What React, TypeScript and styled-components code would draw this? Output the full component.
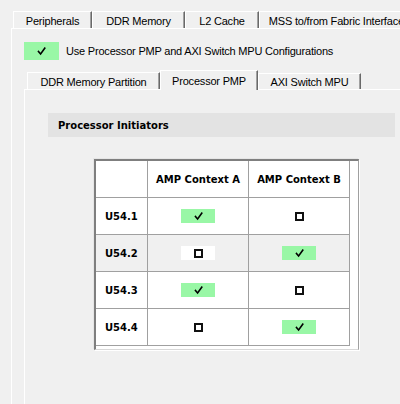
import React from "react";
import styled, { createGlobalStyle } from "styled-components";

const Global = createGlobalStyle`
  html, body { margin: 0; padding: 0; background: #f0f0f0; }
  body { font-family: "Liberation Sans", Arial, sans-serif; font-size: 11px; color: #000; overflow: hidden; }
`;

const Page = styled.div`
  width: 400px;
  height: 404px;
  padding: 11px 0 0 11px;
  box-sizing: border-box;
  overflow: hidden;
  display: flex;
  flex-direction: column;
`;

const TabStrip = styled.div<{ $indent: number }>`
  display: flex;
  align-items: flex-end;
  padding-left: ${(p) => p.$indent}px;
  height: ${(p) => (p.$indent > 2 ? 19 : 17)}px;
  white-space: nowrap;
`;

const Tab = styled.div<{ $w: number; $active?: boolean; $h?: number }>`
  flex: 0 0 auto;
  width: ${(p) => p.$w}px;
  height: ${(p) => p.$h ?? 17}px;
  box-sizing: border-box;
  border-top: 1px solid #ffffff;
  border-left: 1px solid #ffffff;
  border-right: 1px solid #696969;
  box-shadow: inset -1px 0 0 #a0a0a0;
  display: flex;
  align-items: center;
  justify-content: center;
  letter-spacing: -0.2px;
  padding-top: ${(p) => (p.$active ? 0 : 1)}px;
  background: #f0f0f0;
  position: relative;
  z-index: ${(p) => (p.$active ? 2 : 1)};
  margin-bottom: ${(p) => (p.$active ? -1 : 0)}px;
`;

const OuterPanel = styled.div`
  flex: 1;
  border-top: 1px solid #ffffff;
  border-left: 1px solid #ffffff;
  padding: 13px 0 0 12px;
  display: flex;
  flex-direction: column;
`;

const CheckRow = styled.div`
  display: flex;
  align-items: center;
  gap: 7px;
  height: 18px;
  letter-spacing: -0.2px;
`;

const CheckBox = styled.div<{ $on: boolean; $w: number; $h: number }>`
  width: ${(p) => p.$w}px;
  height: ${(p) => p.$h}px;
  background: ${(p) => (p.$on ? "#99f7a6" : "#ffffff")};
  display: flex;
  align-items: center;
  justify-content: center;
  flex: 0 0 auto;
`;

const EmptySquare = styled.div`
  width: 9px;
  height: 9px;
  box-sizing: border-box;
  border: 2px solid #111;
  background: #fff;
`;

const InnerTabs = styled.div`
  margin-top: 10px;
`;

const InnerPanel = styled.div`
  flex: 1;
  border-top: 1px solid #ffffff;
  border-left: 1px solid #ffffff;
  padding: 23px 0 0 23px;
  display: flex;
  flex-direction: column;
  align-items: flex-start;
`;

const SectionHeader = styled.div`
  width: 347px;
  height: 24px;
  background: #e3e3e3;
  box-sizing: border-box;
  padding-left: 10px;
  display: flex;
  align-items: center;
  font-family: "DejaVu Sans", Verdana, sans-serif;
  font-weight: bold;
  font-size: 10px;
`;

const TableFrame = styled.div`
  margin: 22px 0 0 46px;
  width: 265px;
  height: 191px;
  box-sizing: border-box;
  border-top: 2px solid #7f7f7f;
  border-left: 2px solid #7f7f7f;
  border-right: 1px solid #a0a0a0;
  border-bottom: 1px solid #d8d8d8;
  background: #ffffff;
  box-shadow: 1px 1px 0 #ffffff, -1px -1px 0 #e6e6e6;
`;

const Grid = styled.div`
  display: grid;
  grid-template-columns: 52px 101px 101px;
  grid-auto-rows: 37px;
  width: 254px;
  font-family: "DejaVu Sans", Verdana, sans-serif;
  font-weight: bold;
  font-size: 10px;
`;

const Cell = styled.div<{ $alt?: boolean; $label?: boolean }>`
  box-sizing: border-box;
  border-right: 1px solid #a0a0a0;
  border-bottom: 1px solid #a0a0a0;
  background: ${(p) => (p.$alt ? "#f0f0f0" : "#ffffff")};
  display: flex;
  align-items: center;
  justify-content: ${(p) => (p.$label ? "flex-start" : "center")};
  padding-left: ${(p) => (p.$label ? 9 : 0)}px;
`;

const Check = () => (
  <svg width="9" height="9" viewBox="0 0 9 9">
    <path d="M1.5 4.5 L3.6 7 L7.8 1.2" fill="none" stroke="#000" strokeWidth="1.6" strokeLinecap="square" />
  </svg>
);

const Toggle = ({ on, w, h }: { on: boolean; w: number; h: number }) => (
  <CheckBox $on={on} $w={w} $h={h}>{on ? <Check /> : <EmptySquare />}</CheckBox>
);

const rows = [
  { name: "U54.1", a: true, b: false },
  { name: "U54.2", a: false, b: true },
  { name: "U54.3", a: true, b: false },
  { name: "U54.4", a: false, b: true },
];

export default function App() {
  return (
    <Page>
      <Global />
      <TabStrip $indent={2}>
        <Tab $w={79}>Peripherals</Tab>
        <Tab $w={93}>DDR Memory</Tab>
        <Tab $w={74}>L2 Cache</Tab>
        <Tab $w={160}>MSS to/from Fabric Interfaces</Tab>
      </TabStrip>
      <OuterPanel>
        <CheckRow>
          <Toggle on w={35} h={18} />
          <span>Use Processor PMP and AXI Switch MPU Configurations</span>
        </CheckRow>
        <InnerTabs>
          <TabStrip $indent={3}>
            <Tab $w={133}>DDR Memory Partition</Tab>
            <Tab $w={98} $h={20} $active>Processor PMP</Tab>
            <Tab $w={103} $h={16}>AXI Switch MPU</Tab>
          </TabStrip>
        </InnerTabs>
        <InnerPanel>
          <SectionHeader>Processor Initiators</SectionHeader>
          <TableFrame>
            <Grid>
              <Cell />
              <Cell>AMP Context A</Cell>
              <Cell>AMP Context B</Cell>
              {rows.map((r, i) => (
                <React.Fragment key={r.name}>
                  <Cell $label $alt={i === 1}>{r.name}</Cell>
                  <Cell $alt={i === 1}><Toggle on={r.a} w={34} h={14} /></Cell>
                  <Cell $alt={i === 1}><Toggle on={r.b} w={34} h={14} /></Cell>
                </React.Fragment>
              ))}
            </Grid>
          </TableFrame>
        </InnerPanel>
      </OuterPanel>
    </Page>
  );
}
